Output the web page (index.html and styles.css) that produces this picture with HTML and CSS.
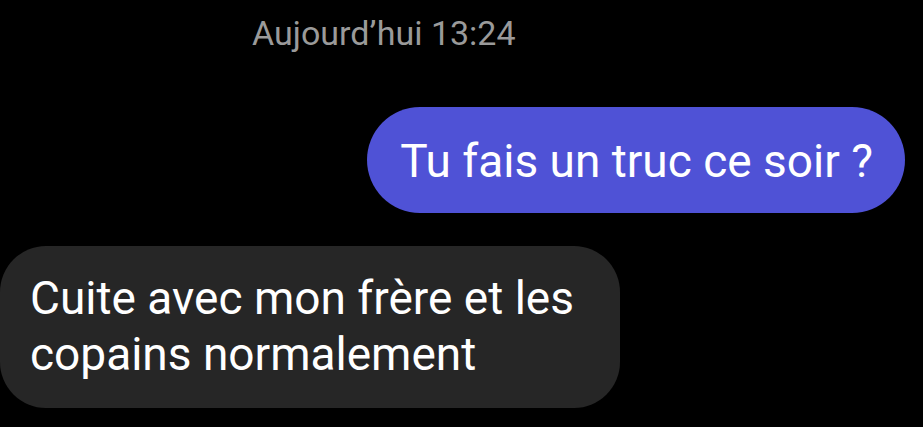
FILE: index.html
```html
<!DOCTYPE html>
<html lang="fr">
<head>
    <meta charset="UTF-8">
    <meta name="viewport" content="width=device-width, initial-scale=1.0">
    <title>Messages</title>
    <link rel="stylesheet" href="styles.css">
</head>
<body>
    <div class="chat">
        <div class="timestamp">Aujourd’hui 13:24</div>
        <div class="bubble sent">Tu fais un truc ce soir ?</div>
        <div class="bubble received">Cuite avec mon frère et les copains normalement</div>
    </div>
</body>
</html>
```

FILE: styles.css
```css
body {
    margin: 0;
    background-color: #000;
    font-family: Roboto, "Noto Sans", sans-serif;
    color: #fff;
}
.chat {
    display: flex;
    flex-direction: column;
    padding-top: 13px;
}
.timestamp {
    align-self: flex-start;
    margin-left: 252px;
    font-size: 34px;
    color: #9a9a9a;
    line-height: 40px;
}
.bubble {
    font-size: 46px;
    line-height: 56px;
}
.sent {
    align-self: flex-end;
    margin-top: 54px;
    margin-right: 18px;
    background-color: #4f52d6;
    border-radius: 53px;
    padding: 26px 32px 24px 33px;
}
.received {
    align-self: flex-start;
    margin-top: 33px;
    max-width: 545px;
    background-color: #262626;
    border-radius: 46px;
    padding: 24px 45px 26px 30px;
}
```
